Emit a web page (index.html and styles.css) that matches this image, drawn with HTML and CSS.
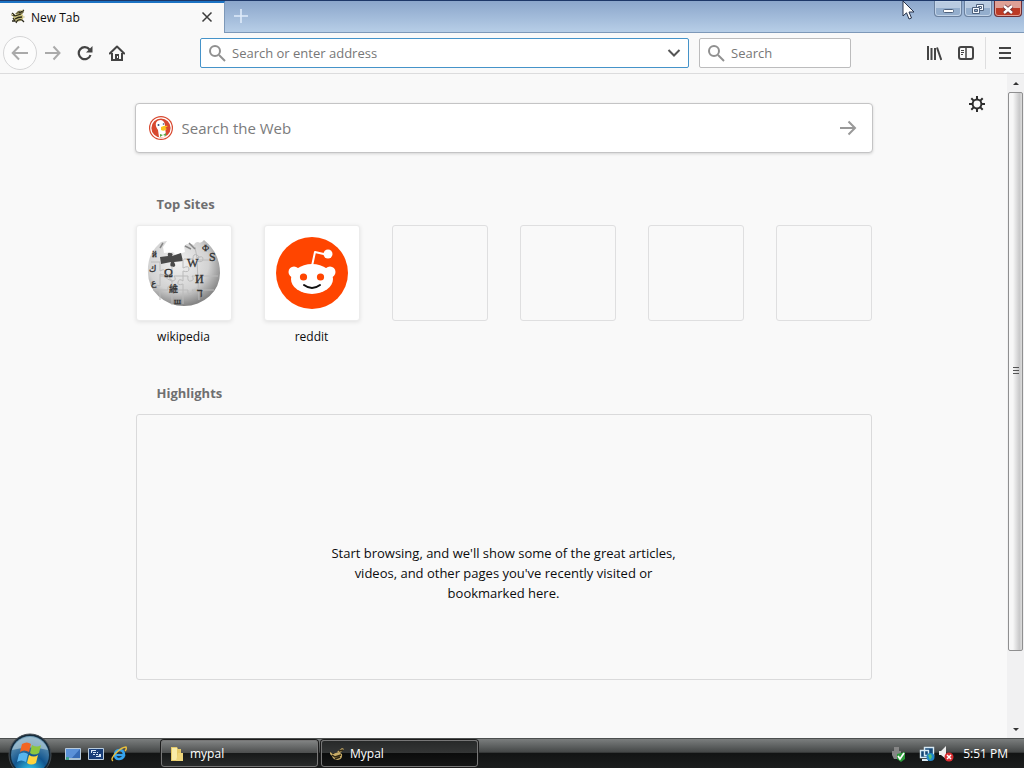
FILE: index.html
```html
<!DOCTYPE html>
<html lang="en">
<head>
    <meta charset="UTF-8">
    <meta name="viewport" content="width=device-width, initial-scale=1.0">
    <title>New Tab</title>
    <link rel="stylesheet" href="styles.css">
</head>
<body>
    <svg class="sprite" aria-hidden="true">
        <symbol id="bee" viewBox="0 0 16 16">
            <path d="M1 6l2-2 2 2-1 2zM5 5l3-3 5-1 1 2-3 3z" fill="#6d6840"/>
            <path d="M4 7q4-4 8-2 3 3 0 6-4 3-8 0-2-2 0-4z" fill="#c9c07c"/>
            <path d="M5 7l6-2M5 10q3-2 7-2M7 12q2-2 5-1M9 4l5-3M2 4l3 3M3 9l2 3H2M7 12l-1 2M12 11l2 2" fill="none" stroke="#2c2a1c" stroke-width="1.3"/>
            <path d="M10 2l3-1M2 6l1-1M13 8h2" stroke="#d9d3a4"/>
        </symbol>
        <symbol id="lens" viewBox="0 0 18 18">
            <circle cx="7" cy="7" r="5" fill="none" stroke="#909090" stroke-width="2"/>
            <path d="M11 11l6 6" stroke="#909090" stroke-width="2"/>
        </symbol>
    </svg>

    <header class="tab-bar">
        <div class="tab">
            <svg class="icon-16"><use href="#bee"/></svg>
            <span class="tab-title">New Tab</span>
            <button class="tab-close" aria-label="Close tab">
                <svg width="12" height="12" viewBox="0 0 12 12"><path d="M1.5 1.5l9 9M10.5 1.5l-9 9" stroke="#3c3c3c" stroke-width="1.5"/></svg>
            </button>
        </div>
        <button class="new-tab" aria-label="New tab">
            <svg width="14" height="14" viewBox="0 0 14 14"><path d="M7 0v14M0 7h14" stroke="#dfecfa" stroke-width="1.6"/></svg>
        </button>
        <div class="window-buttons">
            <button aria-label="Minimize">
                <svg width="14" height="14" viewBox="0 0 14 14"><rect x="2.5" y="7.500" width="10" height="3" rx="1" fill="#fff" stroke="#4d607c"/></svg>
            </button>
            <button aria-label="Restore">
                <svg width="14" height="14" viewBox="0 0 14 14" fill="#f4f8fd" stroke="#4d607c"><path d="M5.5 2.5h7v6h-7z"/><path d="M7.5 4.5h3v2h-3z"/><path d="M1.5 5.5h7v6h-7z"/><path d="M3.5 7.5h3v2h-3z" fill="#8fa8c8"/></svg>
            </button>
            <button class="close" aria-label="Close">
                <svg width="14" height="14" viewBox="0 0 14 14"><path d="M3 4l8 7M11 4l-8 7" stroke="#693039" stroke-width="4"/><path d="M3 4l8 7M11 4l-8 7" stroke="#fff" stroke-width="2.4"/></svg>
            </button>
        </div>
    </header>

    <nav class="toolbar">
        <button class="nav-button back" aria-label="Back">
            <svg width="18" height="16" viewBox="0 0 18 16"><path d="M17 8H2M8 1.5L1.7 8 8 14.5" fill="none" stroke="#aaa" stroke-width="2"/></svg>
        </button>
        <button class="nav-button" aria-label="Forward">
            <svg width="16" height="16" viewBox="0 0 16 16"><path d="M0 8h14M8.5 1.5L14.5 8l-6 6.500" fill="none" stroke="#aaa" stroke-width="2"/></svg>
        </button>
        <button class="nav-button" aria-label="Reload">
            <svg width="16" height="16" viewBox="0 0 16 16"><path d="M12.5 4.500A6 6 0 1 0 13.5 10" fill="none" stroke="#444" stroke-width="2.2"/><path d="M15.500 1v6.500H9z" fill="#444"/></svg>
        </button>
        <button class="nav-button" aria-label="Home">
            <svg width="16" height="16" viewBox="0 0 16 16"><path d="M.8 8.5L8 1.5l7.2 7" fill="none" stroke="#444" stroke-width="2" stroke-linejoin="round" stroke-linecap="round"/><path d="M3 8v7h10V8" fill="none" stroke="#444" stroke-width="2"/><path d="M6 9h4v6H6z" fill="#444"/><path d="M8 11h1v2H8z" fill="#fff"/></svg>
        </button>
        <label class="field address">
            <svg class="icon-18"><use href="#lens"/></svg>
            <input type="text" aria-label="Address" placeholder="Search or enter address">
            <svg width="14" height="10" viewBox="0 0 14 10"><path d="M1.5 2L7 7.5 12.5 2" fill="none" stroke="#555" stroke-width="2"/></svg>
        </label>
        <label class="field search">
            <svg class="icon-18"><use href="#lens"/></svg>
            <input type="text" aria-label="Search" placeholder="Search">
        </label>
        <div class="tools">
            <button class="nav-button" aria-label="Library">
                <svg width="16" height="16" viewBox="0 0 16 16"><path d="M2 1v14M5.5 3v12M9 3v12M11 2.5L15.3 15" fill="none" stroke="#444" stroke-width="2"/></svg>
            </button>
            <button class="nav-button" aria-label="Sidebars">
                <svg width="16" height="16" viewBox="0 0 16 16" fill="none" stroke="#444"><rect x="1" y="2" width="14" height="12" rx="2" stroke-width="2"/><path d="M8 2v12" stroke-width="1.5"/><path d="M3 5.5h3M3 7.5h3M3 9.5h2"/></svg>
            </button>
        </div>
        <button class="nav-button menu" aria-label="Open menu">
            <svg width="14" height="12" viewBox="0 0 14 12"><path d="M1 1h12M1 6h12M1 11h12" stroke="#444" stroke-width="2"/></svg>
        </button>
    </nav>

    <div class="viewport">
        <main class="page">
            <button class="settings" aria-label="Customize your New Tab page">
                <svg width="16" height="16" viewBox="0 0 16 16" fill="none" stroke="#2d2d2d"><circle cx="8" cy="8" r="4.4" stroke-width="2"/><path d="M8 0v4M8 12v4M0 8h4M12 8h4M2.3 2.3l2.8 2.8M10.9 10.9l2.8 2.8M13.7 2.3l-2.8 2.8M5.1 10.9l-2.8 2.8" stroke-width="2"/></svg>
            </button>
            <div class="content">
                <form class="web-search">
                    <svg width="24" height="24" viewBox="0 0 24 24">
                        <circle cx="12" cy="12" r="12" fill="#d8482f"/>
                        <circle cx="12" cy="12" r="10.2" fill="none" stroke="#fff" stroke-width="1.2"/>
                        <path d="M7 7q1-3 5-3 4 1 4 6l1 10q-3 2-7 1L9 14q-3-4-2-7z" fill="#fff"/>
                        <path d="M12 11q4-2 7-1l-3 2 2 1q-3 3-6 1z" fill="#fbc51d"/>
                        <path d="M11 18l3 1 3-2v3l-3-1-3 2z" fill="#59a744"/>
                        <circle cx="9.5" cy="9" r="1" fill="#36537b"/>
                        <circle cx="14.5" cy="8" r=".8" fill="#36537b"/>
                    </svg>
                    <input type="text" aria-label="Search the Web" placeholder="Search the Web">
                    <button type="button" aria-label="Submit search">
                        <svg width="18" height="16" viewBox="0 0 18 16"><path d="M1 8h15M9.5 1.5L16 8l-6.500 6.500" fill="none" stroke="#999" stroke-width="2"/></svg>
                    </button>
                </form>

                <section class="top-sites">
                    <h2>Top Sites</h2>
                    <div class="sites">
                        <a class="site" href="#wikipedia">
                            <span class="tile filled">
                                <svg width="76" height="76" viewBox="0 0 76 76">
                                    <defs>
                                        <radialGradient id="globe" cx=".42" cy=".35" r=".65">
                                            <stop offset="0" stop-color="#f2f2f2"/>
                                            <stop offset=".65" stop-color="#d2d2d2"/>
                                            <stop offset="1" stop-color="#858585"/>
                                        </radialGradient>
                                    </defs>
                                    <path d="M15 7L10 12Q1 22 2 38a36 33 0 0 0 72 0Q74 18 58 5q-3 4-6 2-3 0-4 3-6-3-10 1l1 6-9 3-3-3-9 1-1-6 4-6z" fill="url(#globe)"/>
                                    <path d="M14 22l8-1q-1-4 2-3 4 0 2 3l9-3 2 8-9 1q3 5-1 5-4 0-2-5l-10 2z" fill="#4a4a4a"/>
                                    <path d="M5 27h9v9q5-3 5 1t-5 2v12q-5-2-5 2t5 2v10M26 31v10q-4-2-5 1t5 3v11q6-4 6 0t-6 2v12M37 24v9q6-3 6 1t-6 2v10q-4-3-5 1t5 2v20M14 41h10q-1 6 3 5t1-5h14q-1 6 3 5t1-5h26M7 55h15q-1-5 3-4t1 4h16q-1 5 3 4t1-4h22M49 12l2 11q6-3 6 1t-6 2l2 39M38 24h9q0-6 4-4t0 5h19" fill="none" stroke="#bababa"/>
                                    <path d="M17 8l-3 5M10 17l-3 5M39 11l6 3M43 8l6 6" stroke="#888" stroke-width="1.5"/>
                                    <g class="glyphs">
                                        <text x="18" y="42">Ω</text>
                                        <text x="41" y="32">W</text>
                                        <text x="49" y="48">И</text>
                                        <text class="small" x="23" y="57">維</text>
                                        <text x="51" y="62">ד</text>
                                        <text x="63" y="26">S</text>
                                        <text class="small" x="6" y="22">й</text>
                                        <text class="small" x="3" y="37">ك</text>
                                        <text class="small" x="5" y="51">ع</text>
                                        <text class="small" x="56" y="16">Ф</text>
                                        <text class="small" x="28" y="69">ш</text>
                                    </g>
                                </svg>
                            </span>
                            <span class="site-name">wikipedia</span>
                        </a>
                        <a class="site" href="#reddit">
                            <span class="tile filled">
                                <svg width="72" height="72" viewBox="0 0 72 72">
                                    <circle cx="36" cy="36" r="36" fill="#ff4500"/>
                                    <path d="M36 29l3-14 13 3" fill="none" stroke="#fff" stroke-width="2" stroke-linejoin="round"/>
                                    <circle cx="52" cy="17" r="4.5" fill="#fff"/>
                                    <circle cx="18" cy="35" r="5.5" fill="#fff"/>
                                    <circle cx="54" cy="35" r="5.5" fill="#fff"/>
                                    <ellipse cx="36" cy="42" rx="21" ry="15" fill="#fff"/>
                                    <circle cx="27.5" cy="40" r="3.6" fill="#ff4500"/>
                                    <circle cx="44.5" cy="40" r="3.6" fill="#ff4500"/>
                                    <path d="M28 48q8 6 16 0" fill="none" stroke="#111" stroke-width="2" stroke-linecap="round"/>
                                </svg>
                            </span>
                            <span class="site-name">reddit</span>
                        </a>
                        <div class="tile"></div>
                        <div class="tile"></div>
                        <div class="tile"></div>
                        <div class="tile"></div>
                    </div>
                </section>

                <section class="highlights">
                    <h2>Highlights</h2>
                    <div class="empty-state">
                        <p>Start browsing, and we'll show some of the great articles, videos, and other pages you've recently visited or bookmarked here.</p>
                    </div>
                </section>
            </div>
        </main>
        <div class="scrollbar">
            <button aria-label="Scroll up"><svg width="8" height="5" viewBox="0 0 8 5"><path d="M1 4l3-3 3 3z" fill="#333"/></svg></button>
            <div class="track">
                <div class="thumb">
                    <svg width="8" height="8" viewBox="0 0 8 8"><path d="M1 .5h6M1 3.500h6M1 6.500h6" stroke="#555"/></svg>
                </div>
            </div>
            <button aria-label="Scroll down"><svg width="8" height="5" viewBox="0 0 8 5"><path d="M1 1l3 3 3-3z" fill="#333"/></svg></button>
        </div>
    </div>

    <footer class="taskbar">
        <button class="start" aria-label="Start">
            <svg width="44" height="44" viewBox="0 0 44 44">
                <defs>
                    <radialGradient id="orb" cx=".5" cy=".95" r=".9">
                        <stop offset="0" stop-color="#35d2f5"/>
                        <stop offset=".5" stop-color="#12558e"/>
                        <stop offset="1" stop-color="#6d9cb8"/>
                    </radialGradient>
                </defs>
                <circle cx="22" cy="22" r="21" fill="#142a3b" stroke="#454c52"/>
                <circle cx="22" cy="22" r="19" fill="url(#orb)"/>
                <path d="M4 17a19 19 0 0 1 36 0q-18-5-36 0z" fill="#bdd2dc" opacity=".6"/>
                <path d="M14 11q5-3 9 0l-2 8q-5-3-9 0z" fill="#f26522"/>
                <path d="M24 12q5 3 9 0l-2 8q-5 3-9 0z" fill="#8cc63f"/>
                <path d="M11 21q5-3 9 0l-2 8q-5-3-9 0z" fill="#58b5ef"/>
                <path d="M21 22q5 3 9 0l-2 8q-5 3-9 0z" fill="#ffd43d"/>
            </svg>
        </button>
        <div class="quick-launch">
            <button aria-label="Show desktop">
                <svg width="16" height="16" viewBox="0 0 16 16"><path d="M.5 2.5h15v11H.5z" fill="#376bb5" stroke="#b8cbdd"/><path d="M1 3h14L6 13H1z" fill="#5b91d8"/><path d="M1 12h14v2H1z" fill="#a7bfd2"/><path d="M1 11h3v3H1z" fill="#3fa08c"/></svg>
            </button>
            <button aria-label="Switch windows">
                <svg width="16" height="16" viewBox="0 0 16 16"><path d="M.5 2.5h15v11H.5z" fill="#173d78" stroke="#b8cbdd"/><path d="M2.500 3.500h6v4h-6zM4.500 5.500h6v4h-6zM7.500 7.500h6v4h-6z" fill="#d7e5f5" stroke="#173d78"/></svg>
            </button>
            <button aria-label="Internet Explorer">
                <svg width="16" height="16" viewBox="0 0 16 16"><path d="M4 9h9q0-5-4.500-5T4 9q0 4 4 4 3 0 5-3" fill="none" stroke="#35a4ee" stroke-width="2.6"/><path d="M2 15Q-1 13 5 7T15 1q1 2-1 4" fill="none" stroke="#e9bf3b" stroke-width="1.4"/></svg>
            </button>
        </div>
        <div class="tasks">
            <button class="task">
                <svg width="16" height="16" viewBox="0 0 16 16"><path d="M2 1h6l1 2h3v12H2z" fill="#e5c968"/><path d="M3 2h5v12H3z" fill="#f8eba8"/><path d="M9 7h5v8H7z" fill="#edd57c"/></svg>
                mypal
            </button>
            <button class="task active">
                <svg width="16" height="16" viewBox="0 0 16 16"><path d="M1 6l3 2q5-3 9 0 1 5-4 6-5 0-6-4L1 8zM8 6l5-4 2 1-4 4z" fill="#c9ad67"/><path d="M3 9l3 2 6-2M6 13l5-2M10 5l4-1" stroke="#302713" fill="none" stroke-width="1.5"/></svg>
                Mypal
            </button>
        </div>
        <div class="tray">
            <svg class="eject" width="16" height="16" viewBox="0 0 16 16"><path d="M4 1h5v4H4zM2 5h9v4l-2 4H4L2 9z" fill="#858585"/><path d="M7 8l8-2v7l-4 3-4-3z" fill="#2a9a38"/><path d="M8 10l2 3 4-6" fill="none" stroke="#fff" stroke-width="1.7"/></svg>
            <svg width="16" height="16" viewBox="0 0 16 16"><path d="M5.500 1.500h9v8h-9zM1.500 4.500h8v7h-8z" fill="#164877" stroke="#d8eaf5" stroke-width="1.4"/><path d="M3 14h6" stroke="#d8eaf5" stroke-width="2"/><circle cx="11.500" cy="11" r="4" fill="#2187c9"/><path d="M9 9l3-1 1 3-2 3z" fill="#54be79"/></svg>
            <svg width="16" height="16" viewBox="0 0 16 16"><path d="M1 5h2l5-5v13l-5-4H1z" fill="#eee"/><circle cx="11" cy="11" r="4.5" fill="#d92d31"/><path d="M9 9l4 4M13 9l-4 4" stroke="#fff" stroke-width="1.5"/></svg>
            <time>5:51 PM</time>
        </div>
    </footer>

    <svg class="cursor" width="13" height="20" viewBox="0 0 13 20" aria-hidden="true"><path d="M1 1v15l3.500-3.200L7 19l2.500-1-2.500-6h5z" fill="#fff" stroke="#26324a"/></svg>
</body>
</html>
```
FILE: styles.css
```css
* {
    margin: 0;
    padding: 0;
    box-sizing: border-box;
}

body {
    font-family: 'Open Sans', 'Noto Sans', 'Noto Sans CJK SC', sans-serif;
    font-size: 12px;
    color: #0c0c0d;
    background: #f9f9f9;
    height: 100vh;
    display: flex;
    flex-direction: column;
    overflow: hidden;
}

button {
    font: inherit;
    color: inherit;
    background: none;
    border: none;
    display: flex;
    align-items: center;
    justify-content: center;
}

input {
    font: inherit;
    border: none;
    outline: none;
    background: none;
    flex: 1;
    min-width: 0;
}

svg {
    display: block;
    flex-shrink: 0;
}

.sprite {
    position: absolute;
    width: 0;
    height: 0;
}

.icon-16 {
    width: 16px;
    height: 16px;
}

.icon-18 {
    width: 18px;
    height: 18px;
}

/* Tabs and window frame */
.tab-bar {
    display: flex;
    height: 33px;
    flex-shrink: 0;
    background: linear-gradient(#8ba6cb, #b7cee7);
    border-top: 1px solid #1d3768;
    border-bottom: 1px solid #7d98b8;
}

.tab {
    width: 225px;
    height: 32px;
    display: flex;
    align-items: center;
    gap: 5px;
    padding: 0 10px 2px 10px;
    background: #f9f9f9;
    border-top: 2px solid #1c73c4;
    border-right: 1px solid #7d98b8;
}

.tab-title {
    flex: 1;
}

.tab-close {
    width: 14px;
    height: 14px;
}

.new-tab {
    width: 32px;
    height: 30px;
}

.window-buttons {
    display: flex;
    gap: 2px;
    margin-left: auto;
    padding-right: 2px;
}

.window-buttons button {
    width: 28px;
    height: 16px;
    background: linear-gradient(#b9cbe1 50%, #94aecd 50%);
    border: 1px solid #6a809e;
    border-top: none;
    border-radius: 0 0 4px 4px;
    box-shadow: inset 0 0 0 1px #c3d4e8;
}

.window-buttons .close {
    background: linear-gradient(#dfa096 50%, #bc3a25 50%);
    border-color: #6d2e35;
    box-shadow: inset 0 0 0 1px #e3a094;
}

/* Toolbar */
.toolbar {
    display: flex;
    align-items: center;
    height: 41px;
    flex-shrink: 0;
    padding-left: 3px;
    background: #f9f9f9;
    border-bottom: 1px solid #dcdcdd;
}

.nav-button {
    width: 32px;
    height: 32px;
}

.back {
    width: 34px;
    height: 34px;
    background: #fcfcfc;
    border: 1px solid #d5d5d6;
    border-radius: 50%;
}

.field {
    height: 30px;
    display: flex;
    align-items: center;
    gap: 6px;
    padding: 0 7px;
    background: #fff;
    border: 1px solid #bcbcbd;
    border-radius: 2px;
    font-size: 13px;
}

.field input::placeholder {
    color: #777;
}

.address {
    flex: 1;
    margin-left: 67px;
    border-color: #4593c9;
}

.search {
    width: 152px;
    margin-left: 10px;
}

.tools {
    display: flex;
    margin-left: 67px;
}

.menu {
    width: 39px;
    margin-left: 3px;
    border-left: 1px solid #dededf;
}

/* New tab page */
.viewport {
    flex: 1;
    display: flex;
    min-height: 0;
}

.page {
    flex: 1;
    position: relative;
    overflow: hidden;
    background: #f9f9f9;
}

.settings {
    position: absolute;
    top: 14px;
    right: 14px;
    width: 32px;
    height: 32px;
}

.content {
    max-width: 738px;
    margin: 0 auto;
    padding-top: 29px;
}

.web-search {
    height: 50px;
    display: flex;
    align-items: center;
    gap: 9px;
    padding: 0 14px 0 13px;
    background: #fff;
    border: 1px solid #c4c4c5;
    border-radius: 4px;
    box-shadow: 0 1px 3px rgba(0, 0, 0, 0.15);
    font-size: 15px;
}

.web-search input::placeholder {
    color: #7b7b7c;
}

.web-search button {
    width: 20px;
    height: 32px;
}

.top-sites,
.highlights {
    padding: 0 1px;
}

.top-sites {
    margin-top: 41px;
}

.highlights {
    margin-top: 36px;
}

h2 {
    padding-left: 21px;
    margin-bottom: 11px;
    font-size: 13px;
    line-height: 20px;
    font-weight: 700;
    color: #6f6f70;
}

.sites {
    display: grid;
    grid-template-columns: repeat(6, 96px);
    justify-content: space-between;
}

.site {
    color: inherit;
    text-align: center;
    text-decoration: none;
}

.tile {
    height: 96px;
    display: flex;
    align-items: center;
    justify-content: center;
    border: 1px solid #dfdfe0;
    border-radius: 3px;
}

.tile.filled {
    background: #fff;
    border-color: #ececec;
    box-shadow: 0 1px 4px rgba(0, 0, 0, 0.1);
}

.site-name {
    display: block;
    padding-top: 6px;
    line-height: 20px;
    font-size: 12px;
}

.glyphs {
    font-family: 'Liberation Serif', 'DejaVu Sans', 'Noto Sans CJK SC', serif;
    font-size: 12px;
    fill: #333;
    stroke: #333;
    stroke-width: 0.3px;
}

.glyphs .small {
    font-size: 9px;
}

.empty-state {
    min-height: 266px;
    display: flex;
    align-items: center;
    justify-content: center;
    padding-top: 52px;
    border: 1px solid #dadadb;
    border-radius: 3px;
}

.empty-state p {
    max-width: 350px;
    text-align: center;
    font-size: 13px;
    line-height: 20px;
}

/* Scrollbar */
.scrollbar {
    width: 17px;
    display: flex;
    flex-direction: column;
    background: #f1f1f2;
}

.scrollbar button {
    height: 18px;
}

.track {
    flex: 1;
}

.thumb {
    height: 89%;
    margin: 0 1px;
    display: flex;
    align-items: center;
    justify-content: center;
    background: linear-gradient(90deg, #f7f7f7 30%, #c9c9ca 80%, #dcdcdc);
    border: 1px solid #8f8f90;
    border-radius: 2px;
}

/* Taskbar */
.taskbar {
    height: 30px;
    flex-shrink: 0;
    display: flex;
    padding-left: 8px;
    color: #fff;
    background: linear-gradient(#7b7e7e, #454848 45%, #121414 50%, #1c1e1e);
    border-top: 1px solid #4c4f4f;
}

.start {
    width: 44px;
    height: 44px;
    margin-top: -6px;
    z-index: 1;
}

.quick-launch {
    display: flex;
    align-items: center;
    gap: 7px;
    margin-left: 13px;
}

.tasks {
    display: flex;
    gap: 3px;
    padding-top: 1px;
    margin-left: 34px;
}

.task {
    width: 157px;
    height: 27px;
    justify-content: flex-start;
    gap: 5px;
    padding-left: 7px;
    background: linear-gradient(#808282, #4c4e4e 48%, #171919 50%, #292b2b);
    border: 1px solid #777;
    border-radius: 3px;
    box-shadow: 0 0 0 1px #1b1b1b;
}

.task.active {
    background: linear-gradient(#272929, #343636 48%, #0b0c0c 50%, #151616);
}

.tray {
    display: flex;
    align-items: center;
    gap: 3px;
    margin-left: auto;
    padding-right: 16px;
}

.tray .eject {
    margin-right: 10px;
}

.tray time {
    margin-left: 6px;
}

.cursor {
    position: absolute;
    top: 0;
    left: 902px;
}
```
